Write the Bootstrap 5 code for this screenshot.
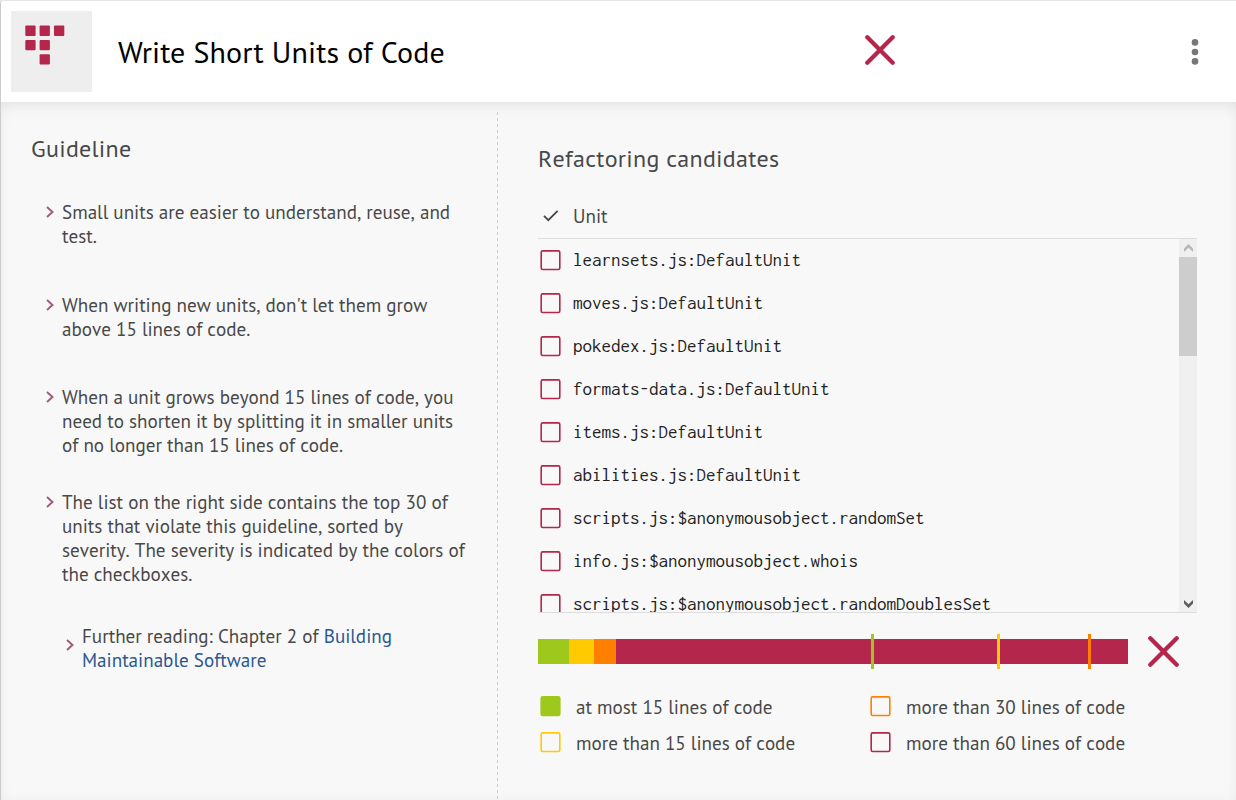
<!DOCTYPE html>
<html lang="en">
<head>
<meta charset="utf-8">
<meta name="viewport" content="width=device-width, initial-scale=1">
<title>Write Short Units of Code</title>
<link rel="stylesheet" href="https://cdn.jsdelivr.net/npm/bootstrap@5.3.0/dist/css/bootstrap.min.css">
<style>
:root { --crimson:#b4264b; --lime:#9ec81c; --sun:#ffca00; --tang:#ff8000; }
body { height:800px; overflow:hidden; font-family:"PT Sans","Open Sans",sans-serif; font-size:19.1px; font-kerning:none; line-height:24px; color:#484848; background:#e6e6e6; }
.panel { height:799px; margin-top:1px; border-left:1px solid #ccc; border-top-left-radius:3px; background:#f8f8f8; overflow:hidden; }
.topbar { height:101px; padding:10px 37px 0 10px; background:#fff; }
.logo-tile { width:81px; height:81px; background:#eee; flex:none; }
.page-title { font-size:30px; line-height:36px; letter-spacing:.1px; font-kerning:normal; font-weight:400; color:#000; width:747px; margin:23px 0 0 26px; }
.content-area { height:698px; box-shadow:inset 0 10px 18px -8px rgba(0,0,0,.08), inset 0 0 14px rgba(0,0,0,.035); }
.guide-col { width:497px; margin-top:10px; padding:22px 0 0 30px; background:repeating-linear-gradient(#ccc 0 3px,transparent 3px 6px) right top/1px 100% no-repeat; }
.section-title { font-size:24px; line-height:30px; letter-spacing:.28px; font-weight:400; margin:0; }
.guide-item { display:flex; margin-left:14px; }
.guide-item svg { flex:none; width:10px; height:12px; margin:6px 7px 0 0; }
.guide-item span { display:block; white-space:nowrap; }
.guide-link { color:#2b5791; text-decoration:none; }
.cand-col { width:659px; margin:42px 0 0 40px; }
.unit-head { height:44px; margin-top:21px; border-bottom:1px solid #ddd; padding-bottom:2px; }
.unit-box { height:374px; border-bottom:1px solid #ddd; overflow:hidden; }
.unit-row { height:43px; padding:0 0 1px 2px; color:#222; font-family:Inconsolata,"Liberation Mono",monospace; font-size:19px; white-space:nowrap; }
.tick-box { width:21px; height:21px; flex:none; fill:none; stroke:var(--crimson); stroke-width:1.6px; }
.unit-row .tick-box { margin-right:12px; }
.scroll-track { width:18px; background:#f0f0f0; }
.scroll-thumb { height:99px; background:#cdcdcd; }
.meter { position:relative; width:590px; height:25px; background:var(--crimson); }
.meter-mark { position:absolute; top:-5px; width:3px; height:35px; }
.legend-cell { width:330px; height:36px; padding-left:2px; }
.legend-cell .tick-box { margin-right:15px; }
.legend-cell span { padding-top:2px; }
</style>
</head>
<body>
<svg class="d-none"><symbol id="box" viewBox="0 0 21 21"><rect x="1.2" y="0.9" width="18.6" height="18.6" rx="1.5"/></symbol><symbol id="chev" viewBox="0 0 10 12"><path d="M2 1 7.5 6 2 11" fill="none" stroke="#a05a78" stroke-width="1.9"/></symbol></svg>
<div class="panel">
  <header class="topbar d-flex align-items-start">
    <div class="logo-tile"><svg width="81" height="81" fill="#b4264b"><rect x="14.3" y="14.6" width="10.3" height="10.3" rx="1"/><rect x="28.6" y="14.6" width="10.3" height="10.3" rx="1"/><rect x="43" y="14.6" width="10.3" height="10.3" rx="1"/><rect x="14.3" y="29" width="10.3" height="10.3" rx="1"/><rect x="28.6" y="29" width="10.3" height="10.3" rx="1"/><rect x="28.6" y="43.2" width="10.3" height="10.3" rx="1"/></svg></div>
    <h1 class="page-title">Write Short Units of Code</h1>
    <svg width="30" height="30" style="margin-top:24px" stroke="#b4264b" stroke-width="4.3" stroke-linecap="round"><path d="M2.3 2.3 27.7 27.7M27.7 2.3 2.3 27.7"/></svg>
    <svg class="ms-auto" width="8" height="28" style="margin-top:27px" fill="#777"><circle cx="4" cy="4.4" r="3.3"/><circle cx="4" cy="14" r="3.3"/><circle cx="4" cy="23.4" r="3.3"/></svg>
  </header>
  <main class="content-area d-flex">
    <section class="guide-col">
      <h2 class="section-title">Guideline</h2>
      <div class="guide-item" style="margin-top:36px"><svg><use href="#chev"/></svg><div><span>Small units are easier to understand, reuse, and</span><span>test.</span></div></div>
      <div class="guide-item" style="margin-top:45px"><svg><use href="#chev"/></svg><div><span>When writing new units, don't let them grow</span><span>above 15 lines of code.</span></div></div>
      <div class="guide-item" style="margin-top:44px"><svg><use href="#chev"/></svg><div><span>When a unit grows beyond 15 lines of code, you</span><span>need to shorten it by splitting it in smaller units</span><span>of no longer than 15 lines of code.</span></div></div>
      <div class="guide-item" style="margin-top:33px"><svg><use href="#chev"/></svg><div><span>The list on the right side contains the top 30 of</span><span>units that violate this guideline, sorted by</span><span>severity. The severity is indicated by the colors of</span><span>the checkboxes.</span></div></div>
      <div class="guide-item" style="margin:38px 0 0 34px"><svg style="margin-top:15px"><use href="#chev"/></svg><div><span>Further reading: Chapter 2 of <a class="guide-link" href="#">Building</a></span><span><a class="guide-link" href="#">Maintainable Software</a></span></div></div>
    </section>
    <section class="cand-col">
      <h2 class="section-title">Refactoring candidates</h2>
      <div class="unit-head d-flex align-items-center"><svg width="20" height="20" style="margin-right:15px" fill="none" stroke="#484848" stroke-width="1.8"><path d="M6 9.8 10.3 14.2 19.6 4.8"/></svg>Unit</div>
      <div class="unit-box d-flex">
        <div class="flex-grow-1">
          <div class="unit-row d-flex align-items-center"><svg class="tick-box"><use href="#box"/></svg>learnsets.js:DefaultUnit</div>
          <div class="unit-row d-flex align-items-center"><svg class="tick-box"><use href="#box"/></svg>moves.js:DefaultUnit</div>
          <div class="unit-row d-flex align-items-center"><svg class="tick-box"><use href="#box"/></svg>pokedex.js:DefaultUnit</div>
          <div class="unit-row d-flex align-items-center"><svg class="tick-box"><use href="#box"/></svg>formats-data.js:DefaultUnit</div>
          <div class="unit-row d-flex align-items-center"><svg class="tick-box"><use href="#box"/></svg>items.js:DefaultUnit</div>
          <div class="unit-row d-flex align-items-center"><svg class="tick-box"><use href="#box"/></svg>abilities.js:DefaultUnit</div>
          <div class="unit-row d-flex align-items-center"><svg class="tick-box"><use href="#box"/></svg>scripts.js:$anonymousobject.randomSet</div>
          <div class="unit-row d-flex align-items-center"><svg class="tick-box"><use href="#box"/></svg>info.js:$anonymousobject.whois</div>
          <div class="unit-row d-flex align-items-center"><svg class="tick-box"><use href="#box"/></svg>scripts.js:$anonymousobject.randomDoublesSet</div>
        </div>
        <div class="scroll-track d-flex flex-column">
          <svg width="18" height="18" fill="#b8b8b8"><path d="M5 9.5 9.5 5 14 9.5V13L9.5 8.7 5 13z"/></svg>
          <div class="scroll-thumb"></div>
          <svg class="mt-auto" width="18" height="18" fill="#5c5c5c"><path d="M5 6V9.5L9.5 14 14 9.5V6L9.5 10.2z"/></svg>
        </div>
      </div>
      <div class="d-flex align-items-center" style="height:77px">
        <div class="meter d-flex">
          <div style="width:31px;background:var(--lime)"></div><div style="width:25px;background:var(--sun)"></div><div style="width:22px;background:var(--tang)"></div>
          <i class="meter-mark" style="left:333px;background:var(--lime)"></i><i class="meter-mark" style="left:459px;background:var(--sun)"></i><i class="meter-mark" style="left:550px;background:var(--tang)"></i>
        </div>
        <svg style="margin-left:20px" width="31" height="31" stroke="#b4264b" stroke-width="4.3" stroke-linecap="round"><path d="M2.3 2.3 28.7 28.7M28.7 2.3 2.3 28.7"/></svg>
      </div>
      <div class="d-flex flex-wrap" style="margin-top:-2px;width:660px">
        <div class="legend-cell d-flex align-items-center"><svg class="tick-box" style="stroke:var(--lime);fill:var(--lime)"><use href="#box"/></svg><span>at most 15 lines of code</span></div>
        <div class="legend-cell d-flex align-items-center"><svg class="tick-box" style="stroke:var(--tang)"><use href="#box"/></svg><span>more than 30 lines of code</span></div>
        <div class="legend-cell d-flex align-items-center"><svg class="tick-box" style="stroke:var(--sun)"><use href="#box"/></svg><span>more than 15 lines of code</span></div>
        <div class="legend-cell d-flex align-items-center"><svg class="tick-box"><use href="#box"/></svg><span>more than 60 lines of code</span></div>
      </div>
    </section>
  </main>
</div>
<script src="https://cdn.jsdelivr.net/npm/bootstrap@5.3.0/dist/js/bootstrap.bundle.min.js"></script>
</body>
</html>
